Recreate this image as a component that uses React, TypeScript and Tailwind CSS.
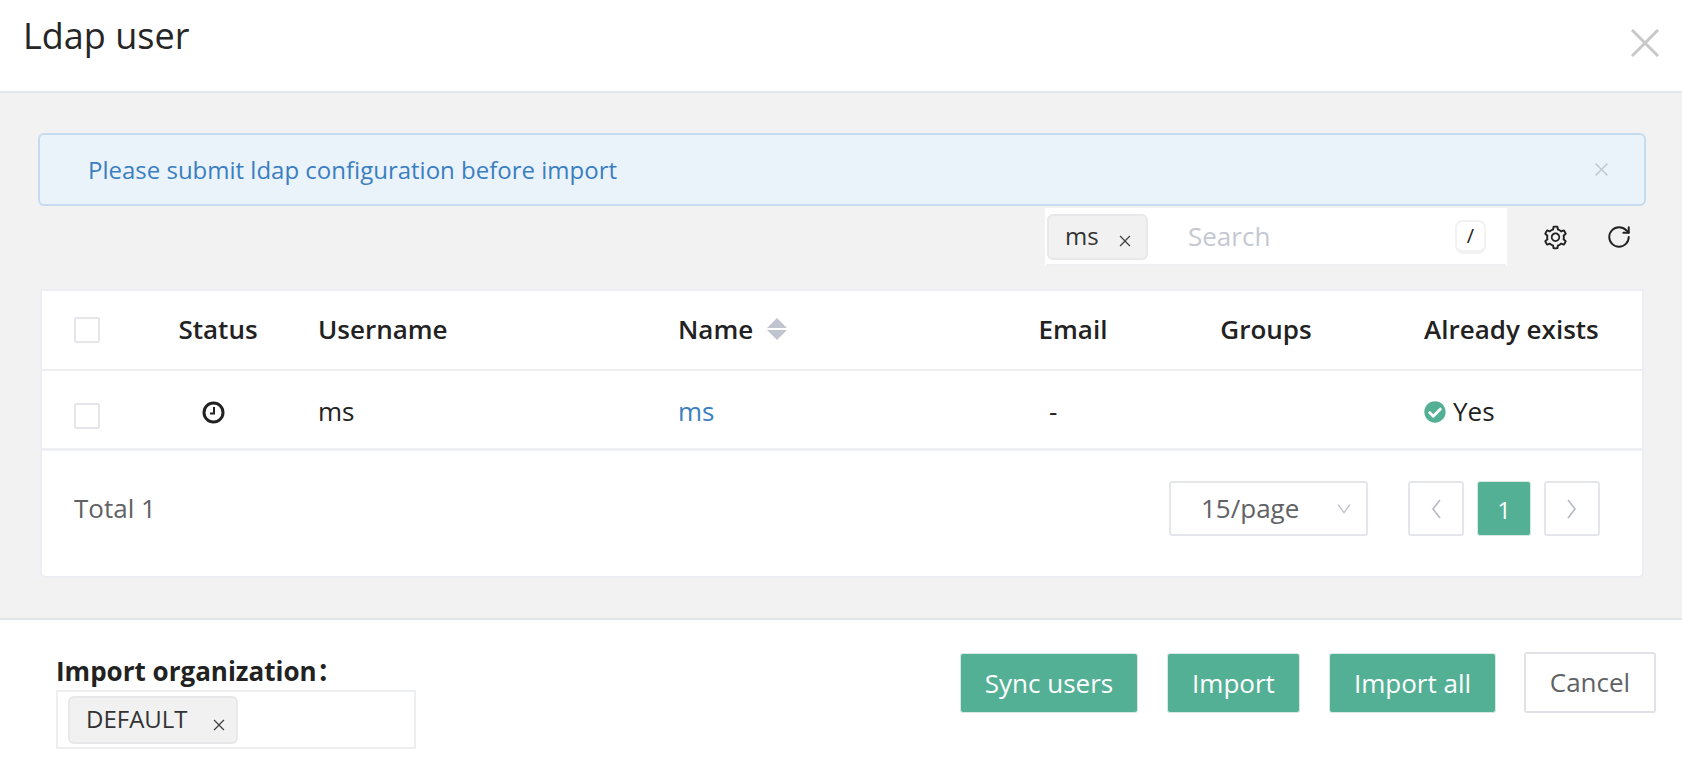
import React from 'react';
import { AiOutlineClose, AiOutlineSetting, AiOutlineDown } from 'react-icons/ai';
import { FaCheckCircle } from 'react-icons/fa';
import { RotateCw } from 'lucide-react';

const rowGrid = 'grid grid-cols-[106px_140px_359px_360px_134px_252px_250px] items-center';

const Checkbox = ({ className = '' }: { className?: string }) => (
  <span className={`block w-[26px] h-[26px] ml-8 bg-white border-2 border-[#e4e6ec] rounded-[2px] ${className}`} />
);

const Tag = ({ label, className, iconClass }: { label: string; className: string; iconClass: string }) => (
  <span className={`flex items-center pb-[2px] bg-[#f1f1f2] border-2 border-[#e8e8ea] rounded-[6px] text-[#333] ${className}`}>
    {label}
    <AiOutlineClose className={`text-[#444] text-[16px] ${iconClass}`} />
  </span>
);

const PageButton = ({ points }: { points: string }) => (
  <span className="flex items-center justify-center w-[56px] h-[55px] border-2 border-[#e4e6ec] rounded-[3px]">
    <svg width="12" height="20" viewBox="0 0 12 20" fill="none" stroke="#b6b9c4" strokeWidth="1.6">
      <polyline points={points} />
    </svg>
  </span>
);

const App = () => {
  return (
    <div className="h-[768px] w-[1682px] overflow-hidden flex flex-col bg-white font-['Open_Sans',sans-serif] text-[#222]">
      {/* title bar */}
      <div className="h-[93px] shrink-0 flex justify-between border-b-2 border-[#e4e7ea] pl-[23px] pr-[23px]">
        <h1 className="text-[36px] leading-[44px] pt-[14px] text-[#262626]">Ldap user</h1>
        <svg className="mt-[29px]" width="28" height="28" viewBox="0 0 28 28" stroke="#c8c8c8" strokeWidth="3">
          <path d="M1 1 L27 27 M27 1 L1 27" />
        </svg>
      </div>

      <div className="flex-1 bg-[#f2f2f2] pt-[40px] pl-[39px] pr-[36px]">
        <div className="-ml-px h-[73px] flex items-center justify-between border-2 border-[#c5dcf0] rounded-[6px] bg-[#ebf3fa] pl-[48px] pr-[33px]">
          <span className="text-[24px] pt-[1px] text-[#3a7fc1]">Please submit ldap configuration before import</span>
          <AiOutlineClose className="text-[#c3c9d0] text-[19px]" />
        </div>

        {/* search toolbar */}
        <div className="mt-[2px] h-[58px] flex justify-end items-center pr-[14px]">
          <div className="w-[462px] h-[58px] flex items-center bg-white border-2 border-white border-b-[#efeff1] pr-[19px]">
            <Tag label="ms" iconClass="mt-[10px]" className="w-[101px] h-[46px] pl-[16px] gap-[18px] text-[24px]" />
            <span className="ml-[40px] pb-[2px] flex-1 text-[26px] text-[#c5c8d2]">Search</span>
            <span className="flex items-center justify-center w-[31px] h-[34px] bg-white border-2 border-b-4 border-[#f2f2f3] rounded-[8px] text-[20px]">/</span>
          </div>
          <AiOutlineSetting className="ml-[35px] text-[27px]" />
          <RotateCw size={26} strokeWidth={1.8} className="ml-[37px]" />
        </div>

        {/* table card */}
        <div className="mt-[23px] ml-px mr-[2px] h-[289px] bg-white border-x-2 border-b-2 border-[#eceef3] rounded-b-[6px]">
          <div className={`${rowGrid} h-[82px] pb-[2px] border-t-2 border-b-2 border-[#eceef3] text-[26px] font-semibold`}>
            <Checkbox className="mt-[2px]" />
            <span className="text-center">Status</span>
            <span className="pl-[30px]">Username</span>
            <span className="pl-[31px] flex items-center gap-[14px]">
              Name
              <svg width="20" height="22" viewBox="0 0 20 22" fill="#c0c4cf">
                <path d="M10 0 L20 10 H0 Z" />
                <path d="M0 12 H20 L10 22 Z" />
              </svg>
            </span>
            <span className="text-center pr-[2px]">Email</span>
            <span className="text-center pr-[2px]">Groups</span>
            <span className="pl-[31px]">Already exists</span>
          </div>
          <div className={`${rowGrid} h-[80px] pt-[4px] border-b-[3px] border-[#eff0f4] text-[26px]`}>
            <Checkbox className="mt-[8px]" />
            <span className="flex justify-center pr-[10px] pt-[2px]">
              <svg width="23" height="23" viewBox="0 0 23 23" fill="none" stroke="#222" strokeWidth="3">
                <circle cx="11.5" cy="11.5" r="9.5" />
                <path d="M12 6 V12.5 H8" strokeWidth="2" />
              </svg>
            </span>
            <span className="pl-[30px]">ms</span>
            <span className="pl-[31px] text-[#3a7fc1]">ms</span>
            <span className="pl-[42px]">-</span>
            <span />
            <span className="pl-[31px] flex items-center gap-[7px]">
              <FaCheckCircle className="text-[#53b095] text-[22px]" />
              Yes
            </span>
          </div>
          <div className="flex items-center justify-between pt-[30px] pl-8 pr-[42px]">
            <span className="text-[26px] text-[#606266]">Total 1</span>
            <div className="flex items-center">
              <span className="flex items-center justify-between w-[199px] h-[55px] border-2 border-[#e4e6ec] rounded-[3px] pl-[30px] pr-[13px] text-[26px] text-[#606266]">
                15/page
                <AiOutlineDown className="text-[#c0c4cf] text-[18px]" />
              </span>
              <div className="ml-[40px] flex gap-[13px]">
                <PageButton points="10,1 3,10 10,19" />
                <span className="flex items-center justify-center pt-[2px] w-[54px] h-[55px] bg-[#53b095] border border-[#d8e8e2] rounded-[3px] text-white text-[24px]">1</span>
                <PageButton points="2,1 9,10 2,19" />
              </div>
            </div>
          </div>
        </div>
      </div>

      {/* footer */}
      <div className="h-[150px] shrink-0 flex justify-between border-t-2 border-[#e4e7ea] pl-[56px] pr-[26px]">
        <div className="pt-[31px]">
          <div className="h-[39px] text-[26px] leading-[38px] font-bold">
            Import organization<span className="font-['Noto_Sans_CJK_SC',sans-serif]">：</span>
          </div>
          <div className="w-[360px] h-[59px] flex items-center border-2 border-[#eceef0] pl-[10px]">
            <Tag label="DEFAULT" iconClass="mt-[13px]" className="w-[170px] h-[48px] pl-[16px] gap-[23px] text-[24px]" />
          </div>
        </div>
        <div className="pt-[33px] flex items-start text-[26px]">
          <button className="w-[178px] h-[60px] bg-[#53b095] border border-[#d8e8e2] rounded-[3px] text-white">Sync users</button>
          <button className="ml-[29px] w-[133px] h-[60px] bg-[#53b095] border border-[#d8e8e2] rounded-[3px] text-white">Import</button>
          <button className="ml-[29px] w-[167px] h-[60px] bg-[#53b095] border border-[#d8e8e2] rounded-[3px] text-white">Import all</button>
          <button className="ml-[28px] w-[132px] h-[61px] -mt-px bg-white border-2 border-[#e0e2e8] rounded-[3px] text-[#606266]">Cancel</button>
        </div>
      </div>
    </div>
  );
};

export default App;
